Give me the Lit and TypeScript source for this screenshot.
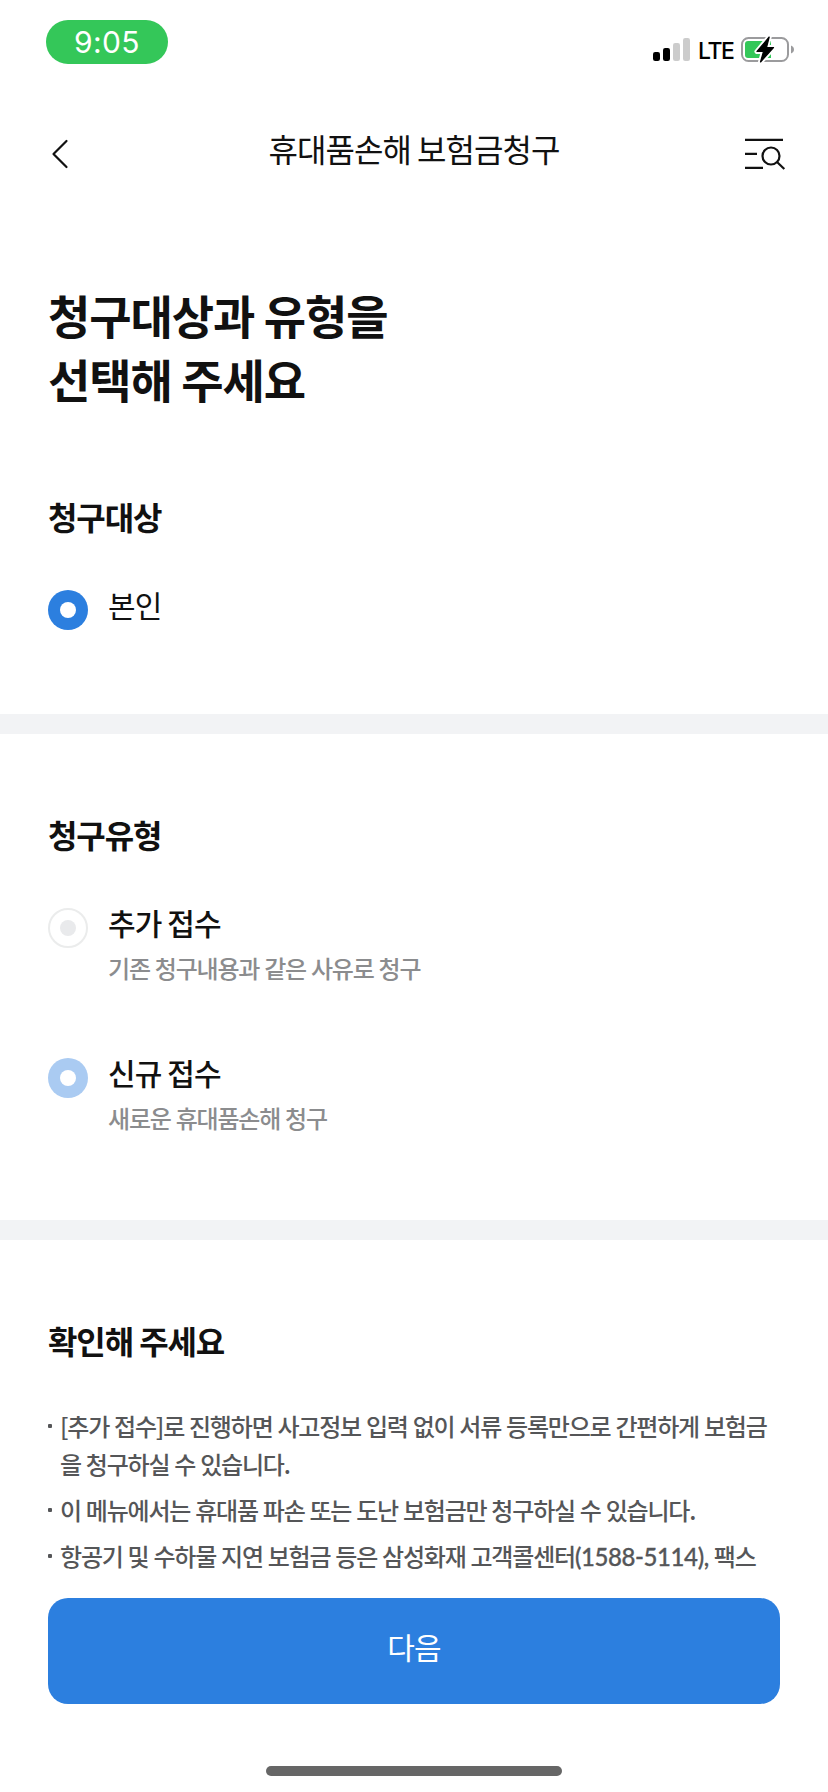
import { LitElement, html, css, svg } from "lit";
import { customElement } from "lit/decorators.js";
import { classMap } from "lit/directives/class-map.js";

const TYPES = [
  { label: "추가 접수", desc: "기존 청구내용과 같은 사유로 청구", state: "off" },
  { label: "신규 접수", desc: "새로운 휴대품손해 청구", state: "dim" },
];

const NOTES = [
  "[추가 접수]로 진행하면 사고정보 입력 없이 서류 등록만으로 간편하게 보험금을 청구하실 수 있습니다.",
  "이 메뉴에서는 휴대품 파손 또는 도난 보험금만 청구하실 수 있습니다.",
  html`항공기 및 수하물 지연 보험금 등은 삼성화재 고객콜센터<span class="phone">(1588-5114),</span> 팩스`,
];

const BOLT = "M28.2 0 L16 14.500 H22.500 L19.500 25 L32.500 10.500 H25.500 Z";

@customElement("app-root")
export class AppRoot extends LitElement {
  static styles = css`
    :host {
      display: block;
      width: 828px;
      height: 1792px;
      overflow: hidden;
      background: #fff;
      color: #111;
      font-family: "Noto Sans CJK KR", sans-serif;
    }
    * { box-sizing: border-box; margin: 0; padding: 0; }
    svg { display: block; }
    .page { display: flex; flex-direction: column; height: 1792px; }
    .status {
      display: flex; justify-content: space-between; align-items: flex-start;
      height: 104px; padding: 20px 33px 0 46px; flex: none;
    }
    .time {
      width: 122px; height: 44px; border-radius: 22px; background: #34c759; color: #fff;
      font: 400 30px/44px Inter, sans-serif; text-align: center; letter-spacing: 0.4px;
    }
    .indicators { display: flex; align-items: center; height: 28px; margin-top: 16px; }
    .lte { font: 500 23px/28px Inter, sans-serif; color: #000; width: 37px; margin: 2px 6px 0 8px; letter-spacing: -1.4px; }
    .header {
      display: grid; grid-template-columns: 100px 1fr 100px; height: 90px; flex: none;
    }
    .header-title {
      text-align: center; font-size: 32px; line-height: 88px; font-weight: 400; letter-spacing: -0.96px;
    }
    .back { padding: 35px 0 0 49.5px; }
    .search { padding: 33px 0 0 15px; }
    .intro { padding: 88px 48px 0; height: 520px; flex: none; }
    .title { font-size: 46px; line-height: 64px; font-weight: 700; letter-spacing: -1.05px; height: 128px; }
    .sub { font-size: 32px; line-height: 48px; font-weight: 700; letter-spacing: -1.1px; }
    .title + .sub { margin-top: 82px; }
    .option { display: flex; gap: 20px; }
    .sub + .option { margin-top: 44px; }
    .option + .option { margin-top: 66px; }
    .radio {
      width: 40px; height: 40px; border-radius: 50%; background: #2c7fdf; margin-top: 6px; flex: none;
      display: grid; place-items: center;
    }
    .radio::after { content: ""; width: 16px; height: 16px; border-radius: 50%; background: #fff; }
    .radio.dim { background: #aacbf2; }
    .radio.off { background: #fff; border: 2px solid #ebecec; }
    .radio.off::after { background: #e9eaec; }
    .label { font-size: 30px; line-height: 40px; letter-spacing: -0.9px; }
    .label.strong { font-weight: 500; }
    .desc {
      font-size: 24px; line-height: 36px; margin-top: 8px; color: #8b8c8e; font-weight: 500;
      letter-spacing: -1.2px; word-spacing: 0.8px;
    }
    .divider { height: 20px; background: #f2f3f5; flex: none; }
    .types { height: 486px; padding: 76px 48px 0; flex: none; }
    .confirm { height: 358px; padding: 76px 48px 0; flex: none; }
    .notes { list-style: none; margin-top: 43px; display: flex; flex-direction: column; gap: 8px; }
    .note {
      display: flex; gap: 8px; font-size: 24px; line-height: 38px; font-weight: 500;
      letter-spacing: -1.2px; word-spacing: 0.75px; color: #555658;
    }
    .note::before {
      content: ""; width: 4px; height: 4px; border-radius: 1px; background: #555658; margin-top: 17px; flex: none;
    }
    .note-text { word-break: break-all; width: 715px; }
    .phone { font-family: Lato, sans-serif; letter-spacing: -0.4px; line-height: 1; -webkit-text-stroke: 0.3px #555658; }
    .next {
      display: block; width: 732px; height: 106px; margin: 0 48px; flex: none; border: 0; border-radius: 20px;
      background: #2c7fdf; color: #fff; font: 400 30px/96px "Noto Sans CJK KR", sans-serif;
      letter-spacing: -0.9px; padding-bottom: 10px; text-align: center;
    }
    .home { width: 296px; height: 10px; border-radius: 5px; background: #666; margin: 62px auto 0 266px; flex: none; }
  `;

  private option(label: string, state: string, desc?: string) {
    return html`<div class="option" role="radio" aria-checked=${state !== "off"}>
      <span class="radio ${state}"></span>
      <div>
        <p class=${classMap({ label: true, strong: !!desc })}>${label}</p>
        ${desc ? html`<p class="desc">${desc}</p>` : null}
      </div>
    </div>`;
  }

  private signal() {
    return html`<svg width="37" height="24" viewBox="0 0 37 24">
      ${[9, 13, 18, 23].map(
        (h, i) => svg`<rect x=${i * 10} y=${23 - h} width="7" height=${h} rx="2.2" fill=${i < 2 ? "#000" : "#ccc"} />`
      )}
    </svg>`;
  }

  private battery() {
    return html`<svg width="54" height="28" viewBox="0 -1 54 28">
      <rect x="1" y="1" width="46" height="23" rx="6.5" fill="none" stroke="#9b9b9d" stroke-width="2" />
      <path d="M50 8.500v8c1.800-.7 3-2.200 3-4s-1.200-3.300-3-4z" fill="#9b9b9d" />
      <path d="M7 4h23v17H7a3 3 0 0 1-3-3V7a3 3 0 0 1 3-3z" fill="#34c759" />
      <path d=${BOLT} fill="#fff" stroke="#fff" stroke-width="5" stroke-linejoin="round" />
      <path d=${BOLT} fill="#000" stroke="#000" stroke-width="1.200" stroke-linejoin="round" />
    </svg>`;
  }

  render() {
    return html`<main class="page">
      <div class="status">
        <div class="time">9:05</div>
        <div class="indicators">${this.signal()}<span class="lte">LTE</span>${this.battery()}</div>
      </div>
      <header class="header">
        <div class="back">
          <svg width="20" height="30" viewBox="0 0 20 30" fill="none" stroke="#111" stroke-width="2.200" stroke-linecap="round" stroke-linejoin="round">
            <path d="M16.500 2 3.500 15l13 13" />
          </svg>
        </div>
        <h1 class="header-title">휴대품손해 보험금청구</h1>
        <div class="search">
          <svg width="44" height="36" viewBox="0 0 44 36" fill="none" stroke="#111" stroke-width="2.200">
            <path d="M2 2.800H40M2 16.800H14M2 30.800H20" />
            <circle cx="28" cy="19" r="8.500" />
            <path d="M34 25l7.300 7" />
          </svg>
        </div>
      </header>
      <section class="intro">
        <h2 class="title">청구대상과 유형을<br />선택해 주세요</h2>
        <h3 class="sub">청구대상</h3>
        ${this.option("본인", "on")}
      </section>
      <div class="divider"></div>
      <section class="types">
        <h3 class="sub">청구유형</h3>
        ${TYPES.map((t) => this.option(t.label, t.state, t.desc))}
      </section>
      <div class="divider"></div>
      <section class="confirm">
        <h3 class="sub">확인해 주세요</h3>
        <ul class="notes">
          ${NOTES.map((n) => html`<li class="note"><span class="note-text">${n}</span></li>`)}
        </ul>
      </section>
      <button class="next">다음</button>
      <div class="home"></div>
    </main>`;
  }
}
